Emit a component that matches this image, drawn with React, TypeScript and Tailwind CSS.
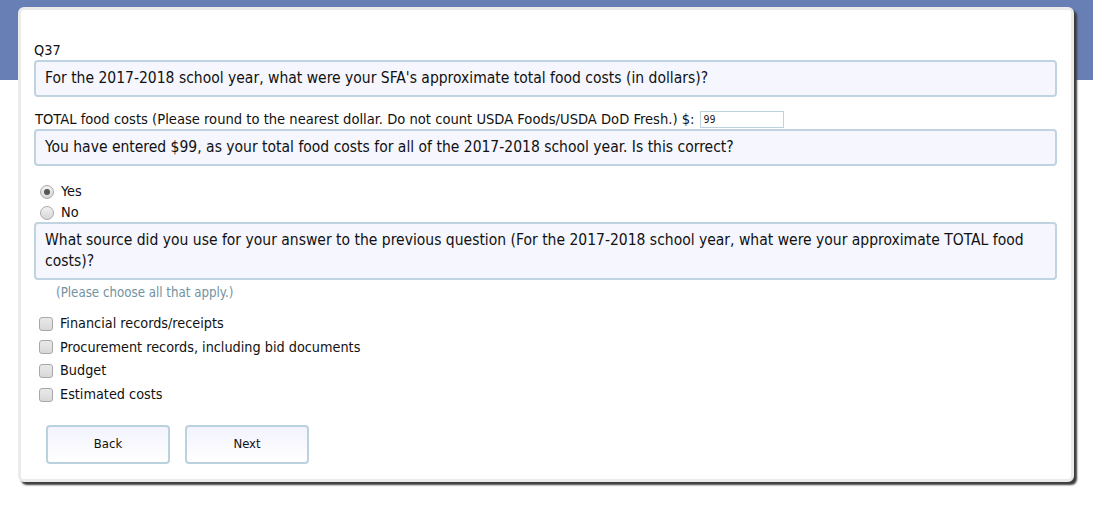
const font = "font-['DejaVu_Sans_Condensed','DejaVu_Sans',sans-serif]";

const sources = [
  "Financial records/receipts",
  "Procurement records, including bid documents",
  "Budget",
  "Estimated costs",
];

function Radio({ checked, label }: { checked?: boolean; label: string }) {
  return (
    <label className="flex h-[21px] items-center gap-[7px] pl-[40px] text-[14.4px] text-[#111]">
      <span className="grid h-[14px] w-[14px] place-items-center rounded-full border border-[#a9a9a9] bg-[linear-gradient(#f2f2f2,#d6d6d6)]">
        {checked && <span className="h-[6px] w-[6px] rounded-full bg-[#555]" />}
      </span>
      {label}
    </label>
  );
}

function Prompt({ children }: { children: React.ReactNode }) {
  return (
    <div className="rounded-[4px] border-2 border-[#bfd4e0] bg-[#f5f6fe] px-[9px] py-[6px] text-[15.5px] leading-[21px] text-[#111]">
      {children}
    </div>
  );
}

export default function App() {
  return (
    <div className={`${font} min-h-[513px] bg-[linear-gradient(#687fb6_0,#687fb6_80px,#fff_80px)] pt-[7px]`}>
      <div className="ml-[18px] h-[475px] w-[1056px] rounded-[6px] border-[3px] border-[#ebebeb] bg-white pl-[13px] pr-[14px] pt-[30px] shadow-[3px_3px_2px_#3c3c3c]">
        <p className="text-[14.4px] leading-[20px] text-[#111]">Q37</p>
        <Prompt>
          For the 2017-2018 school year, what were your SFA's approximate total food costs (in dollars)?
        </Prompt>

        <div className="mt-[12px] flex items-center text-[14.6px] leading-[20px] text-[#111]">
          <span className="pl-[1px]">
            TOTAL food costs (Please round to the nearest dollar. Do not count USDA Foods/USDA DoD Fresh.) $:
          </span>
          <span className="ml-[6px] h-[17px] w-[84px] border border-[#bcd3de] px-[2px] font-['DejaVu_Sans_Mono',monospace] text-[10px] leading-[15px] text-[#222]">
            99
          </span>
        </div>
        <Prompt>
          You have entered $99, as your total food costs for all of the 2017-2018 school year. Is this correct?
        </Prompt>

        <div className="mt-[15px] -ml-[34px]">
          <Radio checked label="Yes" />
          <Radio label="No" />
        </div>

        <div className="-mt-[1px]">
          <Prompt>
            What source did you use for your answer to the previous question (For the 2017-2018 school year, what were your
            approximate TOTAL food costs)?
          </Prompt>
        </div>

        <p className="mt-[5px] pl-[22px] text-[13.2px] leading-[16px] text-[#7391a0]">(Please choose all that apply.)</p>

        <ul className="mt-[11px] -ml-[34px]">
          {sources.map((s) => (
            <li key={s} className="flex h-[23.67px] items-center gap-[7px] pl-[39px] text-[14.3px] text-[#111]">
              <span className="h-[14px] w-[14px] rounded-[3px] border border-[#a8a8a8] bg-[linear-gradient(#e9e9e9,#d8d8d8)]" />
              {s}
            </li>
          ))}
        </ul>

        <div className="mt-[18px] flex gap-[15px] pl-[12px]">
          {["Back", "Next"].map((b) => (
            <button
              key={b}
              className="h-[39px] w-[124px] rounded-[4px] border-2 border-[#bad2de] bg-[linear-gradient(#f2f3fd,#fff)] text-[13px] text-[#111]"
            >
              {b}
            </button>
          ))}
        </div>
      </div>
    </div>
  );
}
